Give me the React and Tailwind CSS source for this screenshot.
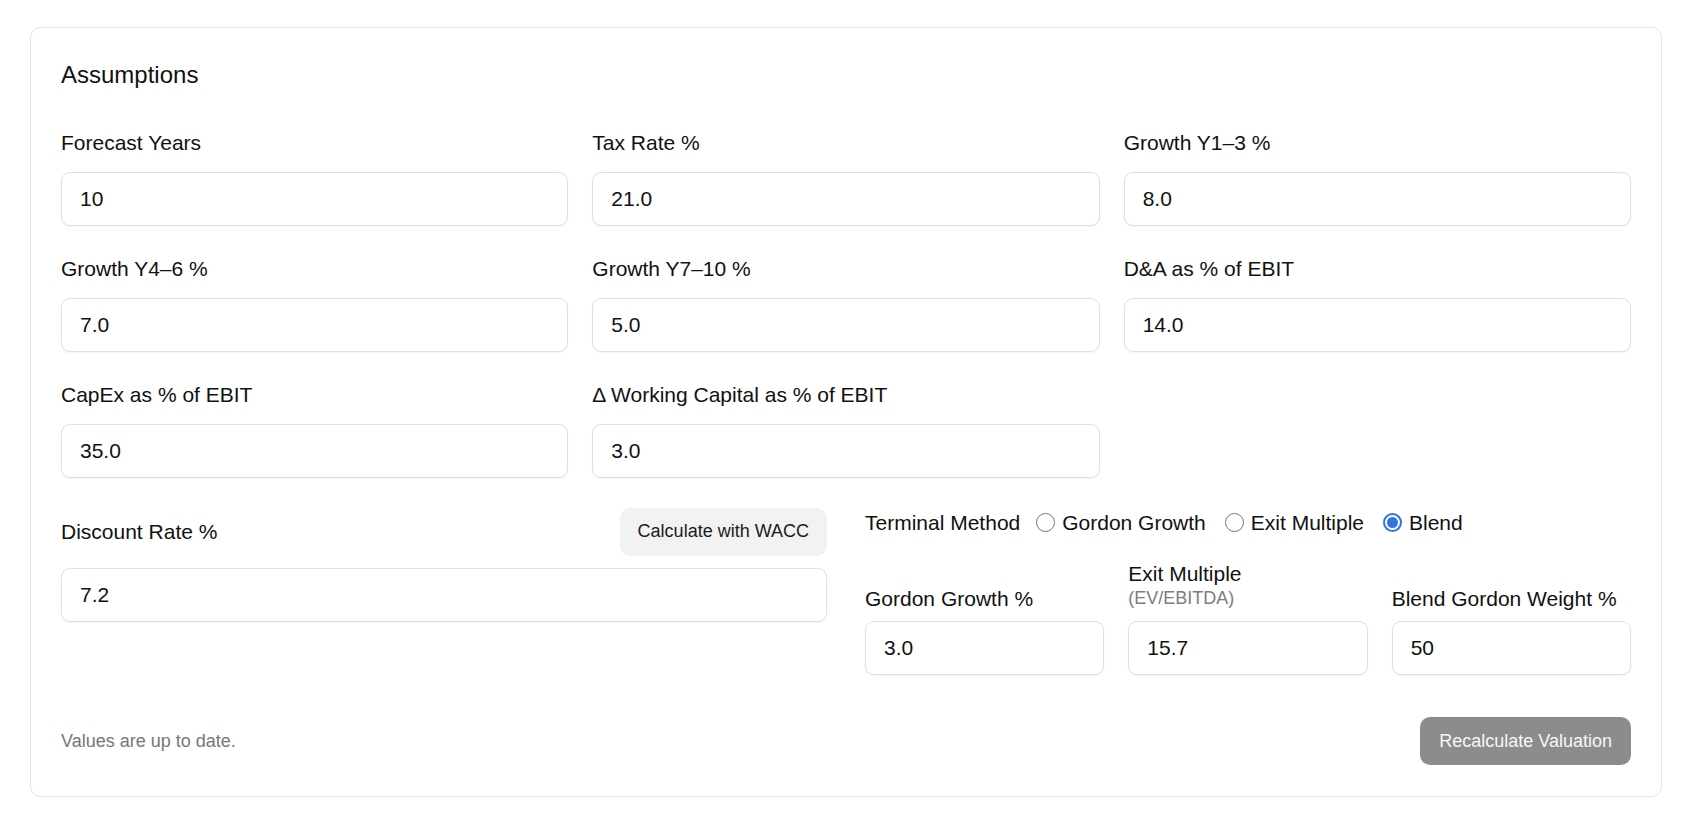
import React from "react";

const font = "font-['Liberation_Sans',Arial,Helvetica,sans-serif]";

function Field({ label, value }) {
  return (
    <div className="flex flex-col">
      <label className="text-[21px] leading-[28px] text-[#111] mb-[15px]">{label}</label>
      <input
        readOnly
        value={value}
        className="h-[54px] w-full rounded-[9px] border border-[#e0e0e0] bg-white px-[18px] text-[21px] text-[#111] shadow-[0_1px_2px_rgba(0,0,0,0.05)] outline-none"
      />
    </div>
  );
}

function Radio({ label, checked }) {
  return (
    <label className="flex items-center gap-[7px] text-[21px] leading-[28px] text-[#111]">
      {checked ? (
        <span className="flex h-[19px] w-[19px] items-center justify-center rounded-full border-[2px] border-[#2f74e0] bg-white">
          <span className="h-[11px] w-[11px] rounded-full bg-[#2f74e0]" />
        </span>
      ) : (
        <span className="h-[19px] w-[19px] rounded-full border-[1.5px] border-[#7a7a7a] bg-white" />
      )}
      <span>{label}</span>
    </label>
  );
}

function SmallInput({ value }) {
  return (
    <input
      readOnly
      value={value}
      className="h-[54px] w-full rounded-[9px] border border-[#e0e0e0] bg-white px-[18px] text-[21px] text-[#111] shadow-[0_1px_2px_rgba(0,0,0,0.05)] outline-none"
    />
  );
}

export default function App() {
  return (
    <div className={`${font} min-h-screen bg-white pl-[30px] pr-[20px] pt-[27px] pb-[22px]`}>
      <div className="rounded-[10px] border border-[#e3e3e3] bg-white px-[30px] pt-[31px] pb-[31px]">
        <h2 className="text-[24px] leading-[32px] text-[#111] mb-[38px]">Assumptions</h2>

        <div className="flex flex-col gap-[29px]">
          <div className="grid grid-cols-3 gap-x-6 gap-y-[29px]">
            <Field label="Forecast Years" value="10" />
            <Field label="Tax Rate %" value="21.0" />
            <Field label="Growth Y1–3 %" value="8.0" />
            <Field label="Growth Y4–6 %" value="7.0" />
            <Field label="Growth Y7–10 %" value="5.0" />
            <Field label="D&A as % of EBIT" value="14.0" />
            <Field label="CapEx as % of EBIT" value="35.0" />
            <Field label="Δ Working Capital as % of EBIT" value="3.0" />
          </div>

          <div className="grid grid-cols-2 items-start gap-x-[38px]">
            <div className="flex flex-col">
              <div className="flex h-[49px] items-center justify-between mb-[12px]">
                <span className="text-[21px] leading-[28px] text-[#111]">Discount Rate %</span>
                <button className="h-[48px] rounded-[10px] bg-[#f2f2f2] px-[18px] text-[18px] text-[#1a1a1a]">
                  Calculate with WACC
                </button>
              </div>
              <SmallInput value="7.2" />
            </div>

            <div className="flex flex-col">
              <div className="flex h-[31px] items-center">
                <span className="mr-[16px] text-[21px] leading-[28px] text-[#111]">Terminal Method</span>
                <div className="flex items-center gap-[19px]">
                  <Radio label="Gordon Growth" />
                  <Radio label="Exit Multiple" />
                  <Radio label="Blend" checked />
                </div>
              </div>
              <div className="mt-[22px] grid grid-cols-3 items-end gap-x-6">
                <div className="text-[21px] leading-[28px] text-[#111] mb-[8px]">Gordon Growth %</div>
                <div className="flex flex-col mb-[13px]">
                  <span className="text-[21px] leading-[28px] text-[#111]">Exit Multiple</span>
                  <span className="text-[18px] leading-[20px] text-[#7d7d7d]">(EV/EBITDA)</span>
                </div>
                <div className="text-[21px] leading-[28px] text-[#111] mb-[8px]">Blend Gordon Weight %</div>
                <SmallInput value="3.0" />
                <SmallInput value="15.7" />
                <SmallInput value="50" />
              </div>
            </div>
          </div>
        </div>

        <div className="mt-[42px] flex items-center justify-between">
          <span className="text-[18px] text-[#777]">Values are up to date.</span>
          <button className="h-[48px] rounded-[10px] bg-[#8c8c8c] px-[19px] text-[18px] text-[#f7f7f7]">
            Recalculate Valuation
          </button>
        </div>
      </div>
    </div>
  );
}
